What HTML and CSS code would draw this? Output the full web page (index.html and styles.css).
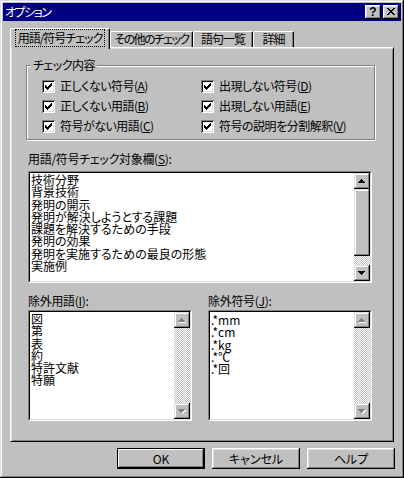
FILE: index.html
```html
<!DOCTYPE html>
<html lang="ja">
<head>
<meta charset="utf-8">
<title>オプション</title>
<link rel="stylesheet" href="styles.css">
</head>
<body>
<div class="window">
  <div class="titlebar">
    <span class="title">オプション</span>
    <div class="title-buttons">
      <div class="tbtn help">?</div>
      <div class="tbtn"><svg width="16" height="14" viewBox="0 0 16 14"><path transform="translate(4 3)" d="M0 0h2v1H0zM6 0h2v1H6zM1 1h2v1H1zM5 1h2v1H5zM2 2h4v1H2zM3 3h2v1H3zM2 4h4v1H2zM1 5h2v1H1zM5 5h2v1H5zM0 6h2v1H0zM6 6h2v1H6z" fill="#000"/></svg></div>
    </div>
  </div>
  <div class="client">
    <div class="tabs">
      <div class="tab active"><span class="focus">用語/符号チェック</span></div>
      <div class="tab t2">その他のチェック</div>
      <div class="tab t3">語句一覧</div>
      <div class="tab t4">詳細</div>
    </div>
    <div class="panel">
      <fieldset class="group">
        <legend>チェック内容</legend>
        <div class="checks">
          <div class="check"><span class="box"><svg width="13" height="13" viewBox="0 0 13 13"><path transform="translate(3 3)" d="M0 2h1v3H0zM1 3h1v3H1zM2 4h1v3H2zM3 3h1v3H3zM4 2h1v3H4zM5 1h1v3H5zM6 0h1v3H6z" fill="#000"/></svg></span><span>正しくない符号(<u>A</u>)</span></div>
          <div class="check"><span class="box"><svg width="13" height="13" viewBox="0 0 13 13"><path transform="translate(3 3)" d="M0 2h1v3H0zM1 3h1v3H1zM2 4h1v3H2zM3 3h1v3H3zM4 2h1v3H4zM5 1h1v3H5zM6 0h1v3H6z" fill="#000"/></svg></span><span>出現しない符号(<u>D</u>)</span></div>
          <div class="check"><span class="box"><svg width="13" height="13" viewBox="0 0 13 13"><path transform="translate(3 3)" d="M0 2h1v3H0zM1 3h1v3H1zM2 4h1v3H2zM3 3h1v3H3zM4 2h1v3H4zM5 1h1v3H5zM6 0h1v3H6z" fill="#000"/></svg></span><span>正しくない用語(<u>B</u>)</span></div>
          <div class="check"><span class="box"><svg width="13" height="13" viewBox="0 0 13 13"><path transform="translate(3 3)" d="M0 2h1v3H0zM1 3h1v3H1zM2 4h1v3H2zM3 3h1v3H3zM4 2h1v3H4zM5 1h1v3H5zM6 0h1v3H6z" fill="#000"/></svg></span><span>出現しない用語(<u>E</u>)</span></div>
          <div class="check"><span class="box"><svg width="13" height="13" viewBox="0 0 13 13"><path transform="translate(3 3)" d="M0 2h1v3H0zM1 3h1v3H1zM2 4h1v3H2zM3 3h1v3H3zM4 2h1v3H4zM5 1h1v3H5zM6 0h1v3H6z" fill="#000"/></svg></span><span>符号がない用語(<u>C</u>)</span></div>
          <div class="check"><span class="box"><svg width="13" height="13" viewBox="0 0 13 13"><path transform="translate(3 3)" d="M0 2h1v3H0zM1 3h1v3H1zM2 4h1v3H2zM3 3h1v3H3zM4 2h1v3H4zM5 1h1v3H5zM6 0h1v3H6z" fill="#000"/></svg></span><span>符号の説明を分割解釈(<u>V</u>)</span></div>
        </div>
      </fieldset>

      <div class="label first">用語/符号チェック対象欄(<u>S</u>):</div>
      <div class="listbox big">
        <div class="lb-inner">
          <div class="items">
            <div>技術分野</div>
            <div>背景技術</div>
            <div>発明の開示</div>
            <div>発明が解決しようとする課題</div>
            <div>課題を解決するための手段</div>
            <div>発明の効果</div>
            <div>発明を実施するための最良の形態</div>
            <div>実施例</div>
          </div>
          <div class="scrollbar">
            <div class="sb-btn"><svg width="16" height="16" viewBox="0 0 16 16"><path d="M7 6h1v1H7zM6 7h3v1H6zM5 8h5v1H5zM4 9h7v1H4z" fill="#000"/></svg></div>
            <div class="sb-thumb"></div>
            <div class="sb-track"></div>
            <div class="sb-btn"><svg width="16" height="16" viewBox="0 0 16 16"><path d="M4 6h7v1H4zM5 7h5v1H5zM6 8h3v1H6zM7 9h1v1H7z" fill="#000"/></svg></div>
          </div>
        </div>
      </div>

      <div class="pair">
        <div class="col">
          <div class="label">除外用語(<u>I</u>):</div>
          <div class="listbox small">
            <div class="lb-inner">
              <div class="items">
                <div>図</div>
                <div>第</div>
                <div>表</div>
                <div>約</div>
                <div>特許文献</div>
                <div>特願</div>
              </div>
              <div class="scrollbar">
                <div class="sb-btn"><svg width="16" height="16" viewBox="0 0 16 16"><path d="M8 7h1v1H8zM7 8h3v1H7zM6 9h5v1H6zM5 10h7v1H5z" fill="#fff"/><path d="M7 6h1v1H7zM6 7h3v1H6zM5 8h5v1H5zM4 9h7v1H4z" fill="#808080"/></svg></div>
                <div class="sb-track"></div>
                <div class="sb-btn"><svg width="16" height="16" viewBox="0 0 16 16"><path d="M5 7h7v1H5zM6 8h5v1H6zM7 9h3v1H7zM8 10h1v1H8z" fill="#fff"/><path d="M4 6h7v1H4zM5 7h5v1H5zM6 8h3v1H6zM7 9h1v1H7z" fill="#808080"/></svg></div>
              </div>
            </div>
          </div>
        </div>
        <div class="col">
          <div class="label">除外符号(<u>J</u>):</div>
          <div class="listbox small">
            <div class="lb-inner">
              <div class="items sym">
                <div>.*mm</div>
                <div>.*cm</div>
                <div>.*kg</div>
                <div>.*℃</div>
                <div>.*回</div>
              </div>
              <div class="scrollbar">
                <div class="sb-btn"><svg width="16" height="16" viewBox="0 0 16 16"><path d="M8 7h1v1H8zM7 8h3v1H7zM6 9h5v1H6zM5 10h7v1H5z" fill="#fff"/><path d="M7 6h1v1H7zM6 7h3v1H6zM5 8h5v1H5zM4 9h7v1H4z" fill="#808080"/></svg></div>
                <div class="sb-track"></div>
                <div class="sb-btn"><svg width="16" height="16" viewBox="0 0 16 16"><path d="M5 7h7v1H5zM6 8h5v1H6zM7 9h3v1H7zM8 10h1v1H8z" fill="#fff"/><path d="M4 6h7v1H4zM5 7h5v1H5zM6 8h3v1H6zM7 9h1v1H7z" fill="#808080"/></svg></div>
              </div>
            </div>
          </div>
        </div>
      </div>
    </div>

    <div class="buttons">
      <div class="btn default">OK</div>
      <div class="btn">キャンセル</div>
      <div class="btn">ヘルプ</div>
    </div>
  </div>
</div>
</body>
</html>
```

FILE: styles.css
```css
* { box-sizing: border-box; }
html, body { margin: 0; padding: 0; }
body {
  width: 404px;
  height: 478px;
  background: #c0c0c0;
  font-family: "Noto Sans CJK JP", sans-serif;
  font-size: 12px;
  line-height: 12px;
  color: #000;
  font-feature-settings: "palt" 1;
}
svg { display: block; shape-rendering: crispEdges; }
u { text-decoration-thickness: 1px; text-underline-offset: 1px; }

.window {
  width: 404px;
  height: 478px;
  padding: 3px;
  background: #c0c0c0;
  box-shadow: inset -1px -1px #000, inset 1px 1px #dfdfdf, inset -2px -2px #808080, inset 2px 2px #fff;
  display: flex;
  flex-direction: column;
}

.titlebar {
  height: 18px;
  flex: none;
  background: #000080;
  color: #fff;
  display: flex;
  align-items: center;
  justify-content: space-between;
  padding: 0 2px;
}
.title { line-height: 12px; letter-spacing: -1.5px; }
.title-buttons { display: flex; gap: 2px; }
.tbtn {
  width: 16px;
  height: 14px;
  background: #c0c0c0;
  box-shadow: inset -1px -1px #000, inset 1px 1px #fff, inset -2px -2px #808080, inset 2px 2px #dfdfdf;
}
.tbtn.help {
  font-family: "Liberation Sans", sans-serif;
  font-weight: bold;
  font-size: 12px;
  line-height: 14px;
  text-align: center;
  color: #000;
}

.client {
  flex: 1;
  padding: 7px 7px 0 7px;
  display: flex;
  flex-direction: column;
}

.tabs {
  height: 19px;
  display: flex;
  align-items: flex-end;
}
.tab {
  height: 16px;
  border-top: 1px solid #fff;
  border-left: 1px solid #fff;
  border-right: 1px solid #000;
  border-radius: 2px 2px 0 0;
  box-shadow: inset -1px 0 #808080;
  line-height: 14px;
  text-align: center;
  white-space: nowrap;
  letter-spacing: -1px;
  background: #c0c0c0;
}
.tab.active {
  width: 100px;
  height: 21px;
  margin-bottom: -2px;
  position: relative;
  z-index: 1;
  padding-top: 1px;
}
.t2 { width: 83px; letter-spacing: -1.6px; }
.t3 { width: 60px; }
.t4 { width: 41px; }
.focus {
  display: inline-block;
  outline: 1px dotted #000;
  outline-offset: 0;
  padding: 1px 2px;
  line-height: 14px;
}

.panel {
  height: 395px;
  flex: none;
  border: 1px solid;
  border-color: #fff #000 #000 #fff;
  box-shadow: inset 1px 1px #dfdfdf, inset -1px -1px #808080;
  padding: 11px 21px 0 17px;
}

.group {
  margin: 0 -3px 0 -2px;
  padding: 5px 0 3px 4px;
  border: 1px solid #808080;
  box-shadow: inset 1px 1px #fff, 1px 1px #fff;
  min-width: 0;
}
.group legend {
  padding: 0 2px;
  line-height: 12px;
  background: #c0c0c0;
  letter-spacing: -0.5px;
}
.checks {
  display: grid;
  grid-template-columns: 159px 1fr;
  grid-auto-rows: 20px;
  padding-left: 11px;
}
.check {
  display: flex;
  align-items: center;
  gap: 5px;
  white-space: nowrap;
  letter-spacing: -0.5px;
}
.box {
  width: 13px;
  height: 13px;
  flex: none;
  background: #fff;
  box-shadow: inset 1px 1px #808080, inset -1px -1px #fff, inset 2px 2px #000, inset -2px -2px #dfdfdf;
}

.label { margin-top: 12px; white-space: nowrap; letter-spacing: -0.3px; }
.label.first { margin-top: 13px; }

.listbox {
  border: 1px solid;
  border-color: #808080 #fff #fff #808080;
}
.listbox.big { margin-top: 6px; height: 112px; }
.listbox.small { margin-top: 3px; height: 111px; }
.lb-inner {
  height: 100%;
  border: 1px solid;
  border-color: #000 #dfdfdf #dfdfdf #000;
  background: #fff;
  display: flex;
}
.items {
  flex: 1;
  min-width: 0;
  padding: 1px 0 0 1px;
  line-height: 12.3px;
  white-space: nowrap;
}
.items.sym { padding-top: 2px; }

.scrollbar {
  width: 16px;
  flex: none;
  display: flex;
  flex-direction: column;
}
.sb-btn, .sb-thumb {
  background: #c0c0c0;
  box-shadow: inset -1px -1px #000, inset 1px 1px #dfdfdf, inset -2px -2px #808080, inset 2px 2px #fff;
}
.sb-btn { height: 16px; flex: none; }
.sb-thumb { height: 67px; flex: none; }
.sb-track {
  flex: 1;
  background-image: repeating-conic-gradient(#c0c0c0 0 25%, #fff 0 50%);
  background-size: 2px 2px;
}

.pair {
  display: grid;
  grid-template-columns: 164px 164px;
  column-gap: 16px;
}

.buttons {
  display: flex;
  justify-content: flex-end;
  gap: 7px;
  margin-top: 6px;
  margin-right: -1px;
}
.btn {
  width: 88px;
  height: 21px;
  display: flex;
  align-items: center;
  justify-content: center;
  background: #c0c0c0;
  box-shadow: inset -1px -1px #000, inset 1px 1px #fff, inset -2px -2px #808080, inset 2px 2px #dfdfdf;
}
.btn.default {
  box-shadow: inset 0 0 0 1px #000, inset -2px -2px #000, inset 2px 2px #fff, inset -3px -3px #808080;
}
```
